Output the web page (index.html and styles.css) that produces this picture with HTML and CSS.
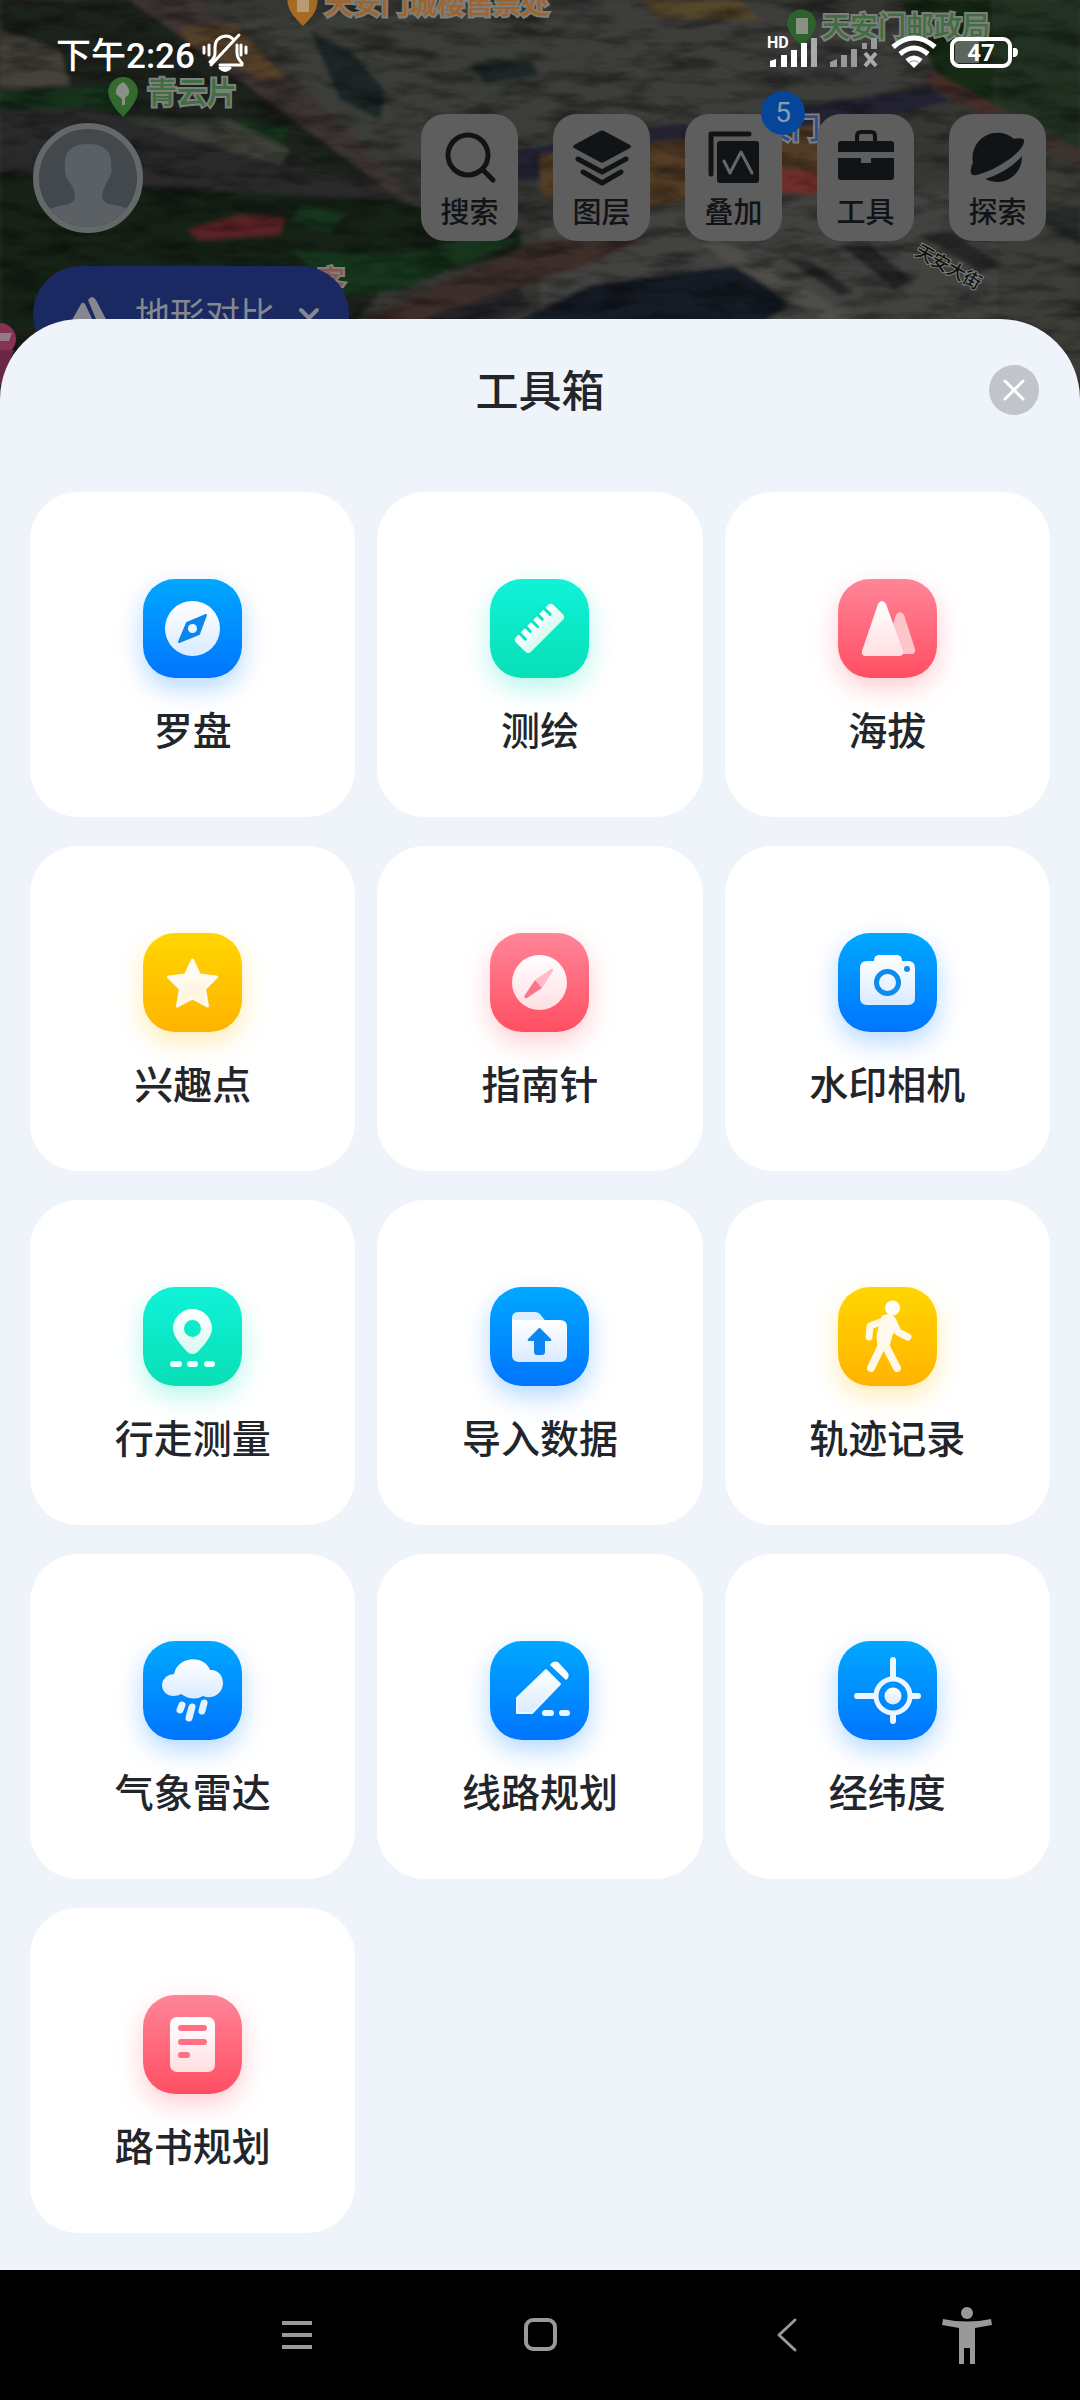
FILE: index.html
```html
<!DOCTYPE html>
<html lang="zh-CN">
<head>
<meta charset="utf-8">
<meta name="viewport" content="width=device-width, initial-scale=1">
<title>工具箱</title>
<link rel="stylesheet" href="styles.css">
</head>
<body>
<div class="screen">
  <svg class="map" viewBox="0 0 1080 420" preserveAspectRatio="xMidYMin slice" aria-hidden="true">
    <defs>
      <filter id="grain" x="0" y="0" width="100%" height="100%">
        <feTurbulence type="fractalNoise" baseFrequency="0.02 0.07" numOctaves="4" seed="7"/>
        <feColorMatrix values="0 0 0 0 0  0 0 0 0 0  0 0 0 0 0  2.6 0 0 0 -1.1"/>
      </filter>
      <filter id="soft"><feGaussianBlur stdDeviation="2"/></filter>
    </defs>
    <rect width="1080" height="420" fill="#363733"/>
    <g filter="url(#soft)">
      <path d="M0 0H200L330 110 420 240 350 330 0 420Z" fill="#1c231b"/>
      <path d="M0 30 60 50 70 85 0 90Z" fill="#44423a"/>
      <path d="M0 92 110 85 130 110 0 125ZM235 120 290 125 280 150 225 140Z" fill="#12301a"/>
      <path d="M120 118 230 120 290 150 270 180 150 170Z" fill="#3d4038"/>
      <path d="M0 175 200 160 400 200 520 230 520 255 300 300 0 330Z" fill="#192219"/>
      <path d="M300 205 345 215 330 232 290 222ZM290 250 400 255 480 235 520 240 400 290 345 295Z" fill="#12351b"/>
      <path d="M188 230 240 215 285 218 280 234 200 240Z" fill="#5a2027"/>
      <path d="M0 110 90 108 260 160 420 190 420 200 180 190 0 170Z" fill="#2c292a"/>
      <path d="M130 0 200 0 330 110 425 210 395 195 240 80Z" fill="#3d3431"/>
      <path d="M180 28 235 24 285 78 262 80 190 46Z" fill="#54412a"/>
      <path d="M235 20 540 0 600 110 540 150 380 160Z" fill="#3b3c39"/>
      <path d="M310 30 350 50 385 90 380 120 340 100ZM470 65 530 60 540 75 485 84Z" fill="#1e2527"/>
      <path d="M420 165 700 120 930 88 950 100 700 170 450 185Z" fill="#242033"/>
      <path d="M540 0 740 0 900 30 950 80 700 125 540 110Z" fill="#3d3d3b"/>
      <path d="M640 0 740 0 760 20 660 18Z" fill="#554729"/>
      <path d="M900 0H1080V165L940 80Z" fill="#142a17"/>
      <path d="M930 70 1080 150V168L920 80Z" fill="#452d2a"/>
      <path d="M540 155 820 125 820 190 640 205 540 195Z" fill="#523d25"/>
      <path d="M780 168 818 172 818 195 780 192Z" fill="#702d2b"/>
      <path d="M540 225 1080 170V420H540Z" fill="#43423f"/>
      <path d="M350 325 540 240 650 235 600 260 350 345Z" fill="#3e2e2c"/>
      <path d="M520 320 590 285 740 265 790 305 760 325 540 340Z" fill="#151e28"/>
      <path d="M350 345 520 285 530 310 430 345Z" fill="#252629"/>
      <path d="M780 255 810 260 855 292 840 296ZM840 245 870 245 915 282 895 290ZM920 235 950 232 1005 265 980 272Z" fill="#252725"/>
      <path d="M1040 210 1080 205V245L1045 225Z" fill="#1b2129"/>
      <path d="M720 240 870 325 840 330 700 245Z" fill="#504e49"/>
      <path d="M990 0H1080V420H1000Z" fill="#343a32" opacity=".4"/>
    </g>
    <rect width="1080" height="420" filter="url(#grain)" opacity=".4"/>
    <g class="place">
      <path d="M288 5a15 15 0 1 1 29 0q-1 9-14 21q-13-12-15-21Z" fill="#a76a24"/>
      <path d="M297 0h12v12h-12z" fill="#b79b75"/>
      <text x="325" y="14" fill="#a1632c">天安门城楼售票处</text>
      <path d="M108 92a15 15 0 1 1 30 0q-1 11-15 25q-14-14-15-25Z" fill="#356a2f"/>
      <path d="M123 82q7 5 6 12l-6 6-7-6q-1-8 7-12M122 95h3v10h-3" fill="#889184"/>
      <text class="large" x="147" y="103" fill="#3f6e42">青云片</text>
      <path d="M787 24a14 14 0 1 1 29 0q-1 10-14 22q-14-12-15-22Z" fill="#2d632b"/>
      <path d="M796 18h12v16h-12z" fill="#889184"/>
      <text x="822" y="37" fill="#3f6e42">天安门邮政局</text>
      <text x="736" y="139" fill="#2c4b94">天安门</text>
      <text x="317" y="291" fill="#8a5550">客</text>
      <text class="street" transform="translate(914 255) rotate(29)">天安大街</text>
    </g>
    <circle cx="0" cy="339" r="16" fill="#853351"/>
    <path d="M0 333h12l-3 8H0z" fill="#927b86"/>
    <path d="M0 350h14L0 386z" fill="#6a2747"/>
  </svg>

  <header class="top">
    <div class="status">
      <div class="clock">
        <span>下午2:26</span>
        <svg width="46" height="40" viewBox="0 0 46 40" fill="none" stroke="#fff" stroke-width="3" stroke-linecap="round" stroke-linejoin="round" aria-label="静音">
          <path d="M8 30q5-4 5-9v-5q0-11 11-12q4 0 7 3M35 13v8q0 5 5 10v2H18M9 33 37 3"/>
          <path d="M18 36h10q-5 5-10 0ZM7 13v10M2 15v6M39 13v10M44 15v6"/>
        </svg>
      </div>
      <div class="signals">
        <svg width="50" height="34" viewBox="0 0 50 34" aria-label="信号">
          <text class="hd" x="0" y="13">HD</text>
          <path d="M3 32v-6l6-2v8zM14 32V20h6v12zM24 32V15h6v17zM34 32V8h6v24z" fill="#fff"/>
          <path d="M44 32V3h6v29z" fill="#aaa"/>
        </svg>
        <svg width="48" height="34" viewBox="0 0 48 34" fill="#999" aria-label="无信号">
          <path d="M0 32v-5l7-3v8zM11 32V20h6v12zM21 32V14h6v18zM32 14V8h5v6zM41 14V3h6v11z"/>
          <path d="M35 18 46 31M46 18 35 31" stroke="#aaa" stroke-width="4"/>
        </svg>
        <svg width="46" height="34" viewBox="0 0 46 34" fill="none" stroke="#fff" stroke-width="5" aria-label="无线网络">
          <path d="M2 12q21-18 42 0M9 19q14-12 28 0M16 26q7-6 14 0"/>
          <path d="m23 33-5-5q5-4 10 0z" fill="#fff" stroke="none"/>
        </svg>
        <svg width="68" height="34" viewBox="0 0 68 34" aria-label="电量">
          <path d="M5 6h24v22H5z" fill="#5c665d"/>
          <rect x="2" y="4" width="58" height="27" rx="7" fill="none" stroke="#fff" stroke-width="4"/>
          <path d="M63 13h2q3 0 3 4t-3 5h-2z" fill="#fff"/>
          <text class="percent" x="31" y="26">47</text>
        </svg>
      </div>
    </div>

    <div class="bar">
      <button class="avatar" aria-label="我的">
        <svg viewBox="0 0 98 98" aria-hidden="true">
          <path d="M26 38q-2-23 23-23t23 23q2 3-1 9-3 5-5 10-3 7-3 11 0 4 6 7 21 3 25 9v14H6V84q4-6 24-9 6-3 6-7 0-6-3-11-3-4-6-10-2-4-1-9Z" fill="#5a6064"/>
        </svg>
      </button>
      <nav class="actions">
        <button class="action">
          <svg viewBox="0 0 60 60" fill="none" stroke="#111416" stroke-width="5" stroke-linecap="round" aria-hidden="true"><circle cx="28" cy="27" r="20"/><path d="m43 42 10 10"/></svg>
          <span>搜索</span>
        </button>
        <button class="action">
          <svg viewBox="0 0 60 60" fill="#111416" aria-hidden="true"><path d="M28 3q2-1 4 0l26 14q2 2 0 3L32 34q-2 1-4 0L2 20q-2-1 0-3Z"/><path d="m6 31 24 13 24-13M11 44l19 11 19-11" fill="none" stroke="#111416" stroke-width="5" stroke-linecap="round" stroke-linejoin="round"/></svg>
          <span>图层</span>
        </button>
        <button class="action">
          <svg viewBox="0 0 60 60" aria-hidden="true"><path d="M7 46V6h38" fill="none" stroke="#111416" stroke-width="5" stroke-linejoin="round" stroke-linecap="round"/><rect x="13" y="13" width="42" height="42" rx="3" fill="#111416"/><path d="m20 33 6 12 11-21 11 21" fill="none" stroke="#67676a" stroke-width="3" stroke-linecap="round" stroke-linejoin="round"/></svg>
          <span>叠加</span>
          <span class="badge">5</span>
        </button>
        <button class="action">
          <svg viewBox="0 0 60 60" fill="#111416" aria-hidden="true"><path d="M5 13h50q3 0 3 3v8H2v-8q0-3 3-3Z"/><path d="M21 13V8q0-4 4-4h10q4 0 4 4v5" fill="none" stroke="#111416" stroke-width="4"/><path d="M2 30h23v5h10v-5h23v19q0 3-3 3H5q-3 0-3-3Z"/></svg>
          <span>工具</span>
        </button>
        <button class="action">
          <svg viewBox="0 0 60 60" fill="#111416" aria-hidden="true"><path d="M5 35A25 25 0 0 1 46 11q9-2 10 1 1 7-13 18Q25 43 9 47q-8 1-6-6 0-3 2-6Z"/><path d="M54 28A25 25 0 0 1 17 51Q40 44 54 28Z"/></svg>
          <span>探索</span>
        </button>
      </nav>
    </div>

    <button class="compare">
      <svg width="44" height="38" viewBox="0 0 44 38" fill="#85888f" aria-hidden="true"><path d="M0 34 14 9q2-3 4 0l12 25ZM21 5q4-6 8 0l15 29H33Z"/></svg>
      <span>地形对比</span>
      <svg width="20" height="14" viewBox="0 0 20 14" fill="none" stroke="#85888f" stroke-width="4" stroke-linecap="round" stroke-linejoin="round" aria-hidden="true"><path d="m2 3 8 8 8-8"/></svg>
    </button>
  </header>

  <main class="sheet">
    <div class="sheet-head">
      <h1>工具箱</h1>
      <button class="close" aria-label="关闭">
        <svg width="24" height="24" viewBox="0 0 24 24" fill="none" stroke="#fff" stroke-width="3" stroke-linecap="round" aria-hidden="true"><path d="m3 3 18 18M21 3 3 21"/></svg>
      </button>
    </div>

    <svg class="defs" width="0" height="0" aria-hidden="true">
      <defs>
        <linearGradient id="w-blue" x2="0" y2="1"><stop stop-color="#fff"/><stop offset="1" stop-color="#d9ebff"/></linearGradient>
        <linearGradient id="w-green" x2="0" y2="1"><stop stop-color="#fff"/><stop offset="1" stop-color="#d5faf0"/></linearGradient>
        <linearGradient id="w-red" x2="0" y2="1"><stop stop-color="#fff"/><stop offset="1" stop-color="#ffdfe3"/></linearGradient>
        <linearGradient id="w-yellow" x2="0" y2="1"><stop stop-color="#fff"/><stop offset="1" stop-color="#fff1d3"/></linearGradient>
      </defs>
    </svg>

    <div class="tools">
      <button class="tool">
        <svg class="tile blue" viewBox="0 0 99 99" aria-hidden="true"><circle cx="49.5" cy="49.5" r="27.5" fill="url(#w-blue)"/><path d="M63 36 56 55 36 63 44 44Z" fill="#0b86ef" stroke="#0b86ef" stroke-width="2" stroke-linejoin="round"/><circle cx="49.5" cy="49.5" r="4.5" fill="#edf6ff"/></svg>
        <span>罗盘</span>
      </button>
      <button class="tool">
        <svg class="tile green" viewBox="0 0 99 99" aria-hidden="true"><g transform="rotate(-45 49.5 49.5)"><rect x="23" y="39" width="53" height="21" rx="4" fill="url(#w-green)"/><path d="M32 38v9M41 38v7M49.5 38v9M58 38v7M67 38v9" stroke="#0ce4c6" stroke-width="3" stroke-linecap="round"/></g></svg>
        <span>测绘</span>
      </button>
      <button class="tool">
        <svg class="tile red" viewBox="0 0 99 99" aria-hidden="true"><path d="M58 36q4-6 8 0l11 34q1 5-4 5H60L52 55Z" fill="#ffc5cc"/><path d="M40 25q4-6 8 0l17 47q1 5-4 5H28q-5 0-4-5Z" fill="url(#w-red)"/></svg>
        <span>海拔</span>
      </button>
      <button class="tool">
        <svg class="tile yellow" viewBox="0 0 99 99" aria-hidden="true"><path d="m49.5 27 7 15 17 2-12 12 3 17-15-8-15 8 3-17-12-12 17-2Z" fill="url(#w-yellow)" stroke="#fffaf0" stroke-width="3" stroke-linejoin="round"/></svg>
        <span>兴趣点</span>
      </button>
      <button class="tool">
        <svg class="tile red" viewBox="0 0 99 99" aria-hidden="true"><circle cx="49.5" cy="49.5" r="27.5" fill="url(#w-red)"/><path d="m45 47 16-11q3-1 2 2L52 55Z" fill="#ffbcc4"/><path d="m45 47 7 8-15 10q-4 1-2-3Z" fill="#f9768a"/></svg>
        <span>指南针</span>
      </button>
      <button class="tool">
        <svg class="tile blue" viewBox="0 0 99 99" aria-hidden="true"><path d="M29 28h7q0-6 5-6h18q5 0 5 6h6q7 0 7 7v30q0 7-7 7H29q-7 0-7-7V35q0-7 7-7Z" fill="url(#w-blue)"/><circle cx="49.5" cy="49.5" r="11" fill="none" stroke="#0d8cf0" stroke-width="5"/><circle cx="69" cy="36" r="3" fill="#0d8cf0"/></svg>
        <span>水印相机</span>
      </button>
      <button class="tool">
        <svg class="tile green" viewBox="0 0 99 99" aria-hidden="true"><path d="M49.5 22a19.5 19.5 0 0 1 19.5 19.5q0 9-15 24-4.5 3-9 0-15-15-15-24A19.5 19.5 0 0 1 49.5 22Zm0 11a8.5 8.5 0 1 0 0 17 8.5 8.5 0 0 0 0-17Z" fill="url(#w-green)"/><path d="M30 77h6M47 77h5M64 77h5" stroke="#e9fff9" stroke-width="6" stroke-linecap="round"/></svg>
        <span>行走测量</span>
      </button>
      <button class="tool">
        <svg class="tile blue" viewBox="0 0 99 99" aria-hidden="true"><path d="M22 36v-5q0-6 6-6h17q3 0 5 2l7 9Z" fill="#dceeff"/><path d="M22 33h48q7 0 7 7v28q0 7-7 7H29q-7 0-7-7Z" fill="url(#w-blue)"/><path d="M48 42q2-2 3 0l10 10q1 2-1 2h-5v11q0 3-3 3h-5q-3 0-3-3V54h-5q-2 0-1-2Z" fill="#0d86f2"/></svg>
        <span>导入数据</span>
      </button>
      <button class="tool">
        <svg class="tile yellow" viewBox="0 0 99 99" aria-hidden="true"><circle cx="54.5" cy="21" r="7.5" fill="#fff"/><g fill="none" stroke="#fff8e6" stroke-linecap="round" stroke-linejoin="round"><path d="M48 33 32 39 31 50M55 34 60 45 70 50" stroke-width="7"/><path d="M45 56 33 81M46 56 59 81" stroke-width="8"/></g><path d="M45 30q7-3 11 2l2 7-5 9-3 12-9-1-1-10 2-9Z" fill="#fff9ec" stroke="#fff9ec" stroke-width="3" stroke-linejoin="round"/></svg>
        <span>轨迹记录</span>
      </button>
      <button class="tool">
        <svg class="tile blue" viewBox="0 0 99 99" aria-hidden="true"><path d="M31 33C35 14 62 14 67 29C75 28 80 35 80 42C80 53 69 59 60 55Q50 61 38 53C29 58 19 53 19 44Q20 34 31 33Z" fill="url(#w-blue)"/><path d="m39 64-2 5M49 66l-3 11M61 62l-2 8" stroke="#e4f2ff" stroke-width="7" stroke-linecap="round"/></svg>
        <span>气象雷达</span>
      </button>
      <button class="tool">
        <svg class="tile blue" viewBox="0 0 99 99" aria-hidden="true"><path d="M56 29 70 43 42 72H27V57Z" fill="url(#w-blue)" stroke="#ecf6ff" stroke-width="2" stroke-linejoin="round"/><path d="M60 24q3-5 8-3l10 11q2 4-2 7Z" fill="#fff"/><path d="M55 72h6M72 72h5" stroke="#e9f5ff" stroke-width="6" stroke-linecap="round"/></svg>
        <span>线路规划</span>
      </button>
      <button class="tool">
        <svg class="tile blue" viewBox="0 0 99 99" aria-hidden="true"><g fill="none" stroke="#edf6ff" stroke-linecap="round"><circle cx="55" cy="55" r="17" stroke-width="5"/><path d="M55 19v17M55 74v6M19 55h17M74 55h6" stroke-width="6"/></g><circle cx="55" cy="55" r="8.5" fill="url(#w-blue)"/></svg>
        <span>经纬度</span>
      </button>
      <button class="tool">
        <svg class="tile red" viewBox="0 0 99 99" aria-hidden="true"><rect x="27" y="22" width="45" height="55" rx="7" fill="url(#w-red)"/><path d="M38 33h23M38 47h23M38 60h6" stroke="#fc7186" stroke-width="6" stroke-linecap="round"/></svg>
        <span>路书规划</span>
      </button>
    </div>
  </main>

  <nav class="system" aria-label="系统导航">
    <button aria-label="最近任务"><svg width="34" height="60" viewBox="0 0 34 60" stroke="#999" stroke-width="4" aria-hidden="true"><path d="M2 18h30M2 30h30M2 42h30"/></svg></button>
    <button aria-label="主页"><svg width="34" height="60" viewBox="0 0 34 60" fill="none" stroke="#999" stroke-width="4" aria-hidden="true"><rect x="2" y="15" width="29" height="29" rx="7"/></svg></button>
    <button aria-label="返回"><svg width="34" height="60" viewBox="0 0 34 60" fill="none" stroke="#999" stroke-width="3" stroke-linecap="round" stroke-linejoin="round" aria-hidden="true"><path d="M26 15 10 30l16 15"/></svg></button>
    <button aria-label="无障碍"><svg width="50" height="60" viewBox="0 0 50 60" fill="#999" aria-hidden="true"><circle cx="25" cy="8" r="6"/><path d="M1 14q24 5 48 0l1 6-17 3v36h-5V43h-6v16h-5V23L0 20Z"/></svg></button>
  </nav>
</div>
</body>
</html>
```

FILE: styles.css
```css
* {
  box-sizing: border-box;
}

body {
  margin: 0;
  background: #000;
  color: #22262b;
  font-family: Roboto, "Noto Sans CJK SC", sans-serif;
}

button {
  margin: 0;
  padding: 0;
  border: 0;
  background: none;
  color: inherit;
  font: inherit;
}

svg {
  display: block;
  flex: none;
}

.screen {
  position: relative;
  display: flex;
  flex-direction: column;
  min-height: 100vh;
  overflow: hidden;
}

/* Dimmed map behind the header and the sheet's round corners */
.map {
  position: absolute;
  top: 0;
  left: 0;
  width: 100%;
  height: 420px;
}

.place text {
  font-size: 28px;
  font-weight: 500;
  stroke: #7d7f79;
  stroke-width: 4px;
  paint-order: stroke;
}

.place .large {
  font-size: 30px;
}

.place .street {
  font-size: 18px;
  fill: #111;
  stroke-width: 2px;
}

.top {
  position: relative;
}

.status {
  display: flex;
  align-items: center;
  justify-content: space-between;
  height: 114px;
  padding: 0 62px 10px 56px;
  color: #fff;
}

.clock {
  display: flex;
  align-items: center;
  gap: 7px;
  font-size: 35px;
  font-weight: 500;
}

.signals {
  display: flex;
  align-items: center;
  gap: 13px;
}

.hd {
  fill: #fff;
  font-size: 16px;
  font-weight: 700;
}

.percent {
  fill: #fff;
  font-size: 24px;
  font-weight: 700;
  text-anchor: middle;
}

.bar {
  display: flex;
  align-items: center;
  justify-content: space-between;
  padding: 0 34px 0 33px;
}

.avatar {
  width: 110px;
  height: 110px;
  border: 6px solid #64686a;
  border-radius: 50%;
  background: #42484c;
  overflow: hidden;
}

.actions {
  display: flex;
  gap: 35px;
}

.action {
  position: relative;
  display: flex;
  flex-direction: column;
  align-items: center;
  width: 97px;
  height: 127px;
  padding-top: 14px;
  border-radius: 24px;
  background: #5f5e5e;
  color: #111416;
  font-size: 29px;
  font-weight: 500;
  line-height: 40px;
}

.action svg {
  width: 60px;
  height: 60px;
  margin-bottom: 5px;
}

.badge {
  position: absolute;
  top: -23px;
  right: -23px;
  width: 44px;
  height: 44px;
  border-radius: 50%;
  background: #06469a;
  color: #8c9cad;
  font-size: 28px;
  font-weight: 400;
  line-height: 44px;
  text-align: center;
}

.compare {
  display: flex;
  align-items: center;
  gap: 24px;
  height: 96px;
  margin: 25px 0 0 33px;
  padding: 0 30px 0 34px;
  border-radius: 48px;
  background: #1a2962;
  color: #85888f;
  font-size: 35px;
}

.compare span {
  margin-top: -4px;
}

.sheet {
  position: relative;
  flex: 1;
  margin-top: -43px;
  padding: 0 30px 37px;
  border-radius: 80px 80px 0 0;
  background: #eff3fa;
}

.sheet-head {
  display: grid;
  grid-template-columns: 1fr auto 1fr;
  align-items: center;
  height: 142px;
  margin-bottom: 31px;
}

.sheet-head h1 {
  grid-column: 2;
  margin: 0;
  padding-bottom: 4px;
  font-size: 43px;
  font-weight: 500;
}

.close {
  display: grid;
  place-items: center;
  justify-self: end;
  width: 50px;
  height: 50px;
  margin-right: 11px;
  border-radius: 50%;
  background: #c0c4cc;
}

.defs {
  position: absolute;
}

.tools {
  display: grid;
  grid-template-columns: repeat(3, 1fr);
  gap: 29px 22px;
}

.tool {
  display: flex;
  flex-direction: column;
  align-items: center;
  height: 325px;
  padding-top: 87px;
  border-radius: 48px;
  background: #fff;
  font-size: 39px;
  font-weight: 500;
  line-height: 56px;
}

.tile {
  width: 99px;
  height: 99px;
  margin-bottom: 26px;
  border-radius: 32px;
}

.blue {
  background: linear-gradient(#00a8ff, #0075ff);
  box-shadow: 0 10px 26px #0080ff4d;
}

.green {
  background: linear-gradient(#10f2d8, #08dfb6);
  box-shadow: 0 10px 26px #0be5c04d;
}

.red {
  background: linear-gradient(#ff8598, #ff4f62);
  box-shadow: 0 10px 26px #ff5a6e4d;
}

.yellow {
  background: linear-gradient(#ffd600, #ffb300);
  box-shadow: 0 10px 26px #ffc0004d;
}

.system {
  position: relative;
  display: grid;
  grid-template-columns: 176fr 242fr 245fr 245fr 117fr 55fr;
  height: 130px;
  background: #000;
}

.system button {
  display: grid;
  place-items: center;
}

.system button:first-child {
  grid-column: 2;
}
```
